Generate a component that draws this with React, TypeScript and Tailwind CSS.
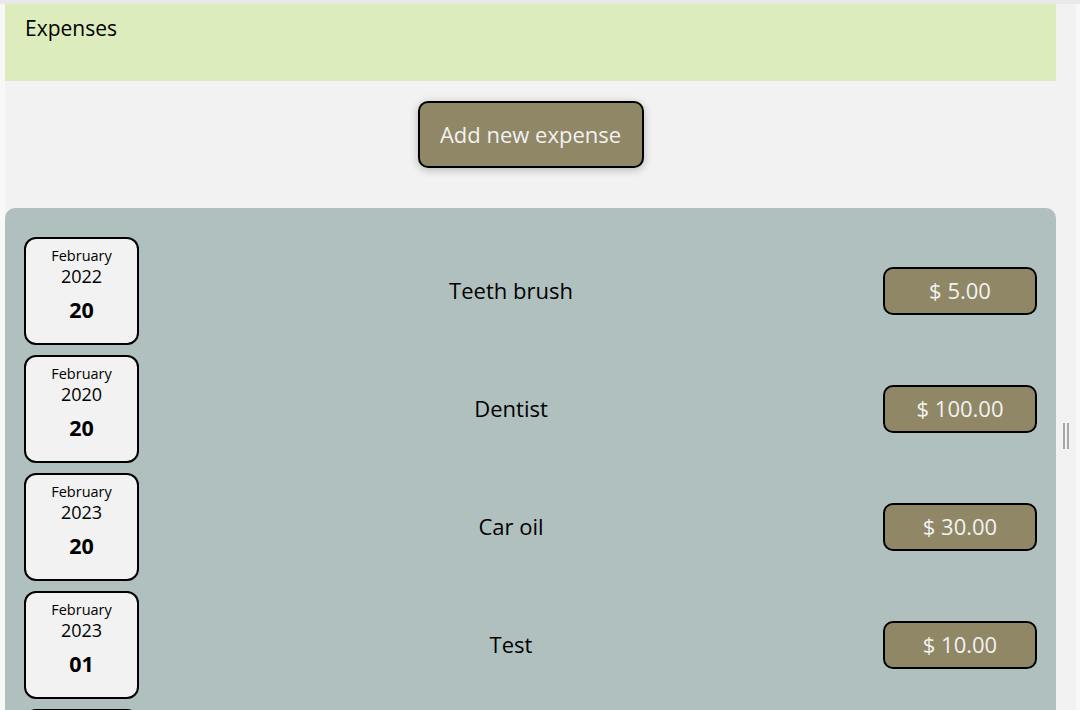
import React from "react";

const items = [
  { month: "February", year: "2022", day: "20", title: "Teeth brush", amount: "$ 5.00" },
  { month: "February", year: "2020", day: "20", title: "Dentist", amount: "$ 100.00" },
  { month: "February", year: "2023", day: "20", title: "Car oil", amount: "$ 30.00" },
  { month: "February", year: "2023", day: "01", title: "Test", amount: "$ 10.00" },
];

export default function App() {
  return (
    <div
      className="w-full h-[710px] overflow-hidden bg-[#f8f8f8] border-t-4 border-[#e9e9e9] flex"
      style={{ fontFamily: '"Open Sans", "Noto Sans", sans-serif' }}
    >
      <div className="w-[5px] shrink-0" />
      <div className="w-[1071px] shrink-0 bg-[#f2f2f2] flex">
        <div className="w-[1051px] shrink-0 flex flex-col">
          <header className="h-[77px] shrink-0 bg-[#dcecbc] px-5 pt-[10px]">
            <h1 className="text-[21px] text-black leading-[28px]">Expenses</h1>
          </header>
          <div className="shrink-0 flex justify-center pt-5 pb-10">
            <button className="w-[226px] h-[67px] rounded-[10px] border-2 border-black bg-[#8f8766] text-[#f2f2f2] text-[22px] shadow-[0_2px_8px_rgba(0,0,0,0.25)]">
              Add new expense
            </button>
          </div>
          <div className="shrink-0 bg-[#b0c0bf] rounded-t-[10px] pt-[29px] px-[19px] flex flex-col gap-[10px]">
            {items.map((it, i) => (
              <div key={i} className="flex items-center">
                <div className="w-[115px] h-[108px] shrink-0 rounded-[12px] border-2 border-black bg-[#f2f2f2] flex flex-col items-center pt-[8px] text-black">
                  <div className="text-[14.5px] leading-[18px]">{it.month}</div>
                  <div className="text-[18px] leading-[22px]">{it.year}</div>
                  <div className="text-[21.5px] font-bold leading-[26px] mt-[10px]">{it.day}</div>
                </div>
                <div className="flex-1 text-center text-[22px] text-black -mt-[2px]">{it.title}</div>
                <div className="w-[154px] h-[48px] shrink-0 rounded-[10px] border-2 border-black bg-[#8f8766] text-[#f2f2f2] text-[22px] flex items-center justify-center pb-[2px]">
                  {it.amount}
                </div>
              </div>
            ))}
            <div className="flex items-center">
              <div className="w-[115px] h-[108px] shrink-0 rounded-[12px] border-2 border-black bg-[#f2f2f2]" />
            </div>
          </div>
        </div>
        <div className="flex-1 flex items-start justify-center pt-[419px]">
          <div className="flex gap-[2px]">
            <div className="w-[2px] h-[26px] bg-[#a8a8a8]" />
            <div className="w-[2px] h-[26px] bg-[#a8a8a8]" />
          </div>
        </div>
      </div>
    </div>
  );
}
